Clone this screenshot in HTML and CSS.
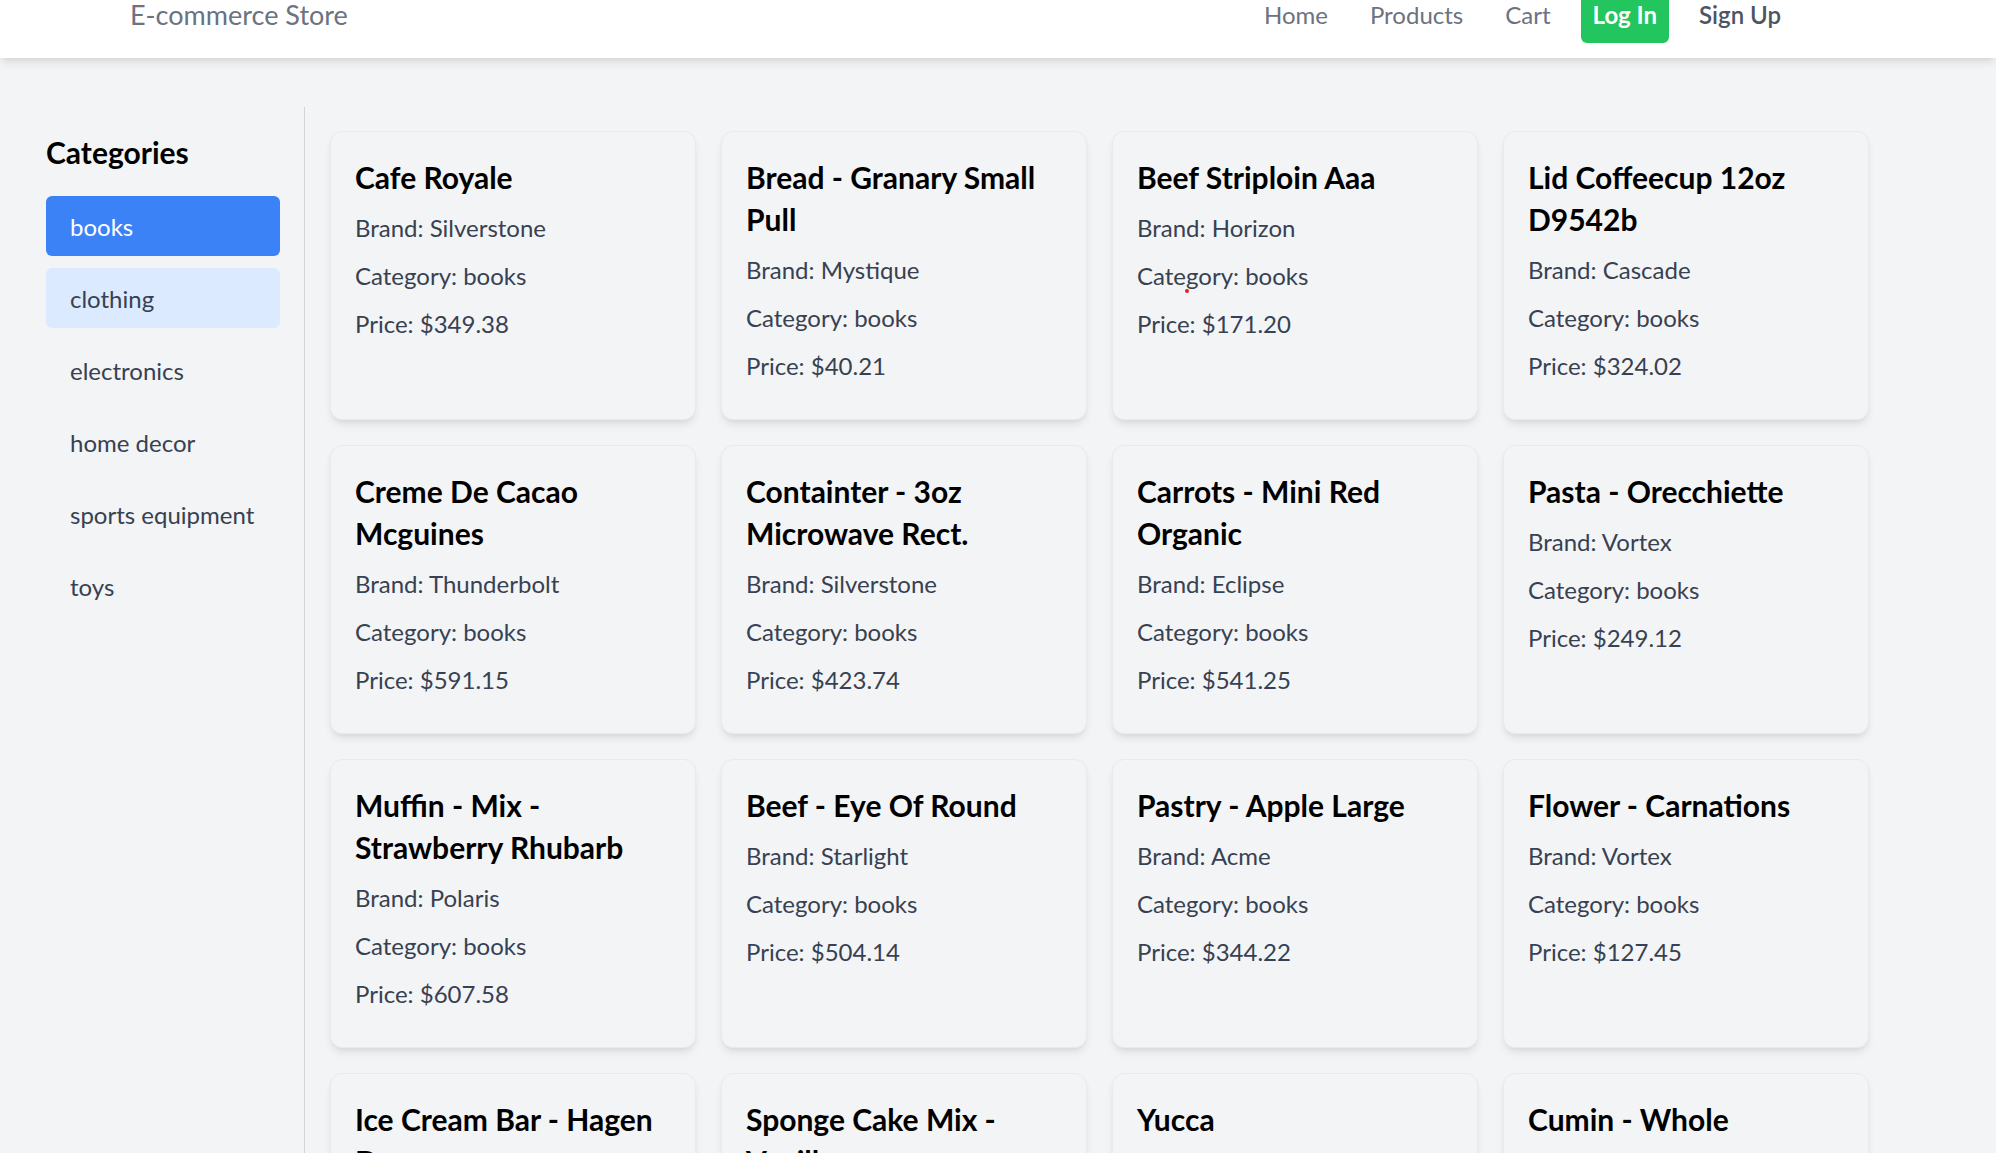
FILE: index.html
```html
<!DOCTYPE html>
<html lang="en">
<head>
<meta charset="utf-8">
<title>E-commerce Store</title>
<link rel="stylesheet" href="styles.css">
</head>
<body>
<header class="header">
  <div class="brand">E-commerce Store</div>
  <nav class="nav">
    <a class="nav-link" href="#">Home</a>
    <a class="nav-link" href="#">Products</a>
    <a class="nav-link" href="#">Cart</a>
    <a class="nav-link nav-login" href="#">Log In</a>
    <a class="nav-link nav-signup" href="#">Sign Up</a>
  </nav>
</header>

<div class="layout">
  <aside class="sidebar">
    <h2 class="sidebar-title">Categories</h2>
    <ul class="cat-list">
      <li class="cat cat-active">books</li>
      <li class="cat cat-hover">clothing</li>
      <li class="cat">electronics</li>
      <li class="cat">home decor</li>
      <li class="cat">sports equipment</li>
      <li class="cat">toys</li>
    </ul>
  </aside>

  <main class="content">
    <div class="grid">
      <div class="card"><h3 class="card-title">Cafe Royale</h3><p class="card-line">Brand: Silverstone</p><p class="card-line">Category: books</p><p class="card-line">Price: $349.38</p></div>
      <div class="card"><h3 class="card-title">Bread - Granary Small Pull</h3><p class="card-line">Brand: Mystique</p><p class="card-line">Category: books</p><p class="card-line">Price: $40.21</p></div>
      <div class="card"><h3 class="card-title">Beef Striploin Aaa</h3><p class="card-line">Brand: Horizon</p><p class="card-line">Category: books</p><p class="card-line">Price: $171.20</p><span class="dot"></span></div>
      <div class="card"><h3 class="card-title">Lid Coffeecup 12oz D9542b</h3><p class="card-line">Brand: Cascade</p><p class="card-line">Category: books</p><p class="card-line">Price: $324.02</p></div>

      <div class="card"><h3 class="card-title">Creme De Cacao Mcguines</h3><p class="card-line">Brand: Thunderbolt</p><p class="card-line">Category: books</p><p class="card-line">Price: $591.15</p></div>
      <div class="card"><h3 class="card-title">Containter - 3oz Microwave Rect.</h3><p class="card-line">Brand: Silverstone</p><p class="card-line">Category: books</p><p class="card-line">Price: $423.74</p></div>
      <div class="card"><h3 class="card-title">Carrots - Mini Red Organic</h3><p class="card-line">Brand: Eclipse</p><p class="card-line">Category: books</p><p class="card-line">Price: $541.25</p></div>
      <div class="card"><h3 class="card-title">Pasta - Orecchiette</h3><p class="card-line">Brand: Vortex</p><p class="card-line">Category: books</p><p class="card-line">Price: $249.12</p></div>

      <div class="card"><h3 class="card-title">Muffin - Mix - Strawberry Rhubarb</h3><p class="card-line">Brand: Polaris</p><p class="card-line">Category: books</p><p class="card-line">Price: $607.58</p></div>
      <div class="card"><h3 class="card-title">Beef - Eye Of Round</h3><p class="card-line">Brand: Starlight</p><p class="card-line">Category: books</p><p class="card-line">Price: $504.14</p></div>
      <div class="card"><h3 class="card-title">Pastry - Apple Large</h3><p class="card-line">Brand: Acme</p><p class="card-line">Category: books</p><p class="card-line">Price: $344.22</p></div>
      <div class="card"><h3 class="card-title">Flower - Carnations</h3><p class="card-line">Brand: Vortex</p><p class="card-line">Category: books</p><p class="card-line">Price: $127.45</p></div>

      <div class="card"><h3 class="card-title">Ice Cream Bar - Hagen Dazs</h3><p class="card-line">Brand: Horizon</p><p class="card-line">Category: books</p><p class="card-line">Price: $212.60</p></div>
      <div class="card"><h3 class="card-title">Sponge Cake Mix - Vanilla</h3><p class="card-line">Brand: Acme</p><p class="card-line">Category: books</p><p class="card-line">Price: $88.19</p></div>
      <div class="card"><h3 class="card-title">Yucca</h3><p class="card-line">Brand: Eclipse</p><p class="card-line">Category: books</p><p class="card-line">Price: $455.30</p></div>
      <div class="card"><h3 class="card-title">Cumin - Whole</h3><p class="card-line">Brand: Polaris</p><p class="card-line">Category: books</p><p class="card-line">Price: $139.87</p></div>
    </div>
  </main>
</div>
</body>
</html>
```
FILE: styles.css
```css
* { box-sizing: border-box; }

html, body {
  margin: 0;
  padding: 0;
  height: 1153px;
  overflow: hidden;
}

body {
  background: #f3f4f6;
  font-family: Lato, "Open Sans", sans-serif;
  color: #374151;
}

/* Header */
.header {
  height: 58px;
  background: #ffffff;
  box-shadow: 0 6px 9px -2px rgba(0, 0, 0, 0.10), 0 3px 6px -3px rgba(0, 0, 0, 0.08);
  display: flex;
  justify-content: space-between;
  align-items: flex-start;
  padding: 0 203px 0 130px;
  overflow: hidden;
  position: relative;
  z-index: 2;
}

.brand {
  font-size: 27px;
  line-height: 32px;
  margin-top: -1px;
  color: #6b7280;
}

.nav {
  display: flex;
  gap: 18px;
  margin-top: -15px;
}

.nav-link {
  display: block;
  padding: 12px 12px 10px;
  font-size: 24px;
  line-height: 36px;
  color: #6b7280;
  text-decoration: none;
  border-radius: 6px;
}

.nav-login {
  background: #22c55e;
  color: #ffffff;
  font-weight: 700;
}

.nav-signup {
  color: #4b5563;
  font-weight: 600;
}

/* Layout */
.layout {
  display: flex;
  margin-top: 49px;
}

.sidebar {
  width: 305px;
  flex: none;
  padding: 24px 24px 0 46px;
  border-right: 1px solid #d1d5db;
  min-height: 1100px;
}

.sidebar-title {
  margin: 0 0 23px;
  font-size: 30px;
  line-height: 42px;
  font-weight: 700;
  color: #000000;
}

.cat-list {
  list-style: none;
  margin: 0;
  padding: 0;
  display: flex;
  flex-direction: column;
  gap: 12px;
}

.cat {
  padding: 13px 24px 11px;
  font-size: 24px;
  line-height: 36px;
  border-radius: 6px;
  color: #374151;
}

.cat-active {
  background: #3b82f6;
  color: #ffffff;
}

.cat-hover {
  background: #dbeafe;
}

/* Product grid */
.content {
  flex: 1;
  padding: 24px 0 0 25px;
}

.grid {
  display: grid;
  grid-template-columns: repeat(4, 366px);
  grid-auto-rows: 289px;
  gap: 25px;
}

.card {
  position: relative;
  background: #f3f4f6;
  border: 1px solid #e9eaec;
  border-radius: 12px;
  padding: 24px 24px 22px;
  box-shadow: 0 6px 10px -2px rgba(0, 0, 0, 0.09), 0 3px 6px -3px rgba(0, 0, 0, 0.08);
}

.card-title {
  margin: 0 0 1px;
  font-size: 30px;
  line-height: 42px;
  font-weight: 700;
  color: #000000;
}

.card-line {
  margin: 12px 0 0;
  font-size: 24px;
  line-height: 36px;
  color: #374151;
}

.dot {
  position: absolute;
  left: 72px;
  top: 157px;
  width: 4px;
  height: 4px;
  border-radius: 50%;
  background: #e11d2a;
}
```
